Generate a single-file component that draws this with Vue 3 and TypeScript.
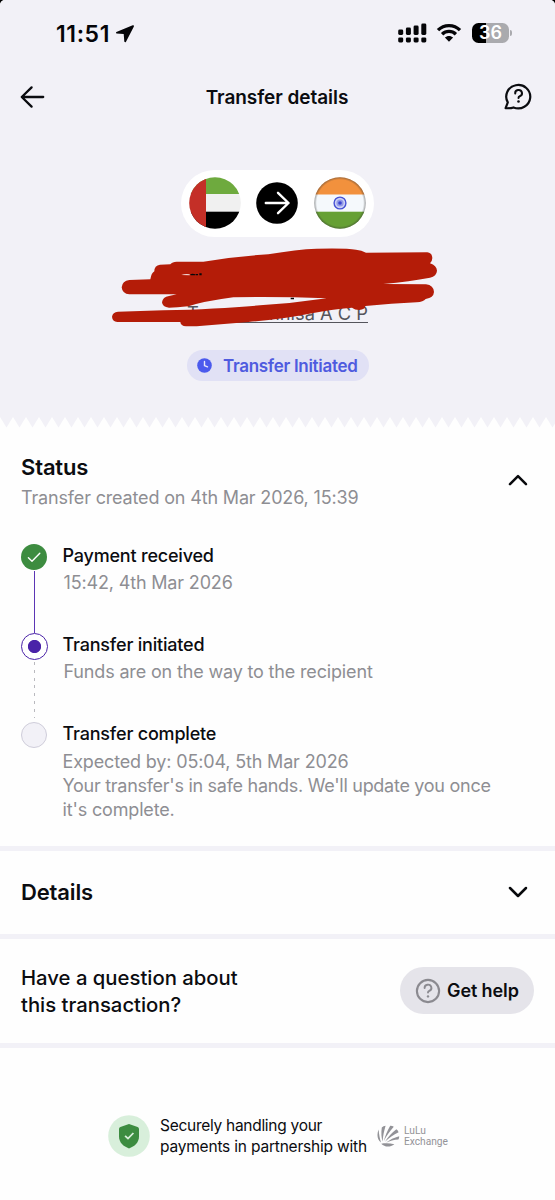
<script setup lang="ts">
type StepState = 'done' | 'active' | 'pending'

interface Step {
  title: string
  lines: string[]
  state: StepState
}

const steps: Step[] = [
  { title: 'Payment received', lines: ['15:42, 4th Mar 2026'], state: 'done' },
  { title: 'Transfer initiated', lines: ['Funds are on the way to the recipient'], state: 'active' },
  {
    title: 'Transfer complete',
    lines: ['Expected by: 05:04, 5th Mar 2026', "Your transfer's in safe hands. We'll update you once", "it's complete."],
    state: 'pending',
  },
]

const signalHeights = [5.5, 7.5, 9.5, 11.5]
</script>

<template>
  <main class="screen">
    <section class="hero">
      <div class="status-bar">
        <div class="clock">
          <span>11:51</span>
          <svg width="20" height="20" viewBox="0 0 20 20">
            <path d="M17.7 1.3 L1.4 8 Q0.4 8.8 1.5 9.5 L8.7 10.1 L9.3 17.6 Q10 19 11 17.8 L18.9 2.4 Q19.2 0.9 17.7 1.3Z" fill="#050508" />
          </svg>
        </div>
        <div class="indicators">
          <svg width="30" height="20" viewBox="0 0 30 20">
            <g fill="#050508">
              <rect v-for="(h, i) in signalHeights" :key="i" :x="0.2 + i * 7.7" :y="12 - h" width="5" :height="h" rx="1.4" />
              <rect v-for="(h, i) in signalHeights" :key="`d${h}`" :x="0.2 + i * 7.7" y="14.4" width="5" height="5" rx="1.4" />
            </g>
          </svg>
          <svg class="wifi" width="26" height="20" viewBox="0 0 26 20">
            <path d="M2 7.2 C8 1 18 1 24 7.2 M6.1 11.3 C10 7.5 16 7.5 19.9 11.3" fill="none" stroke="#050508" stroke-width="3.3" />
            <path d="M8.9 14.6 C11.2 12.3 14.8 12.3 17.1 14.6 L13 18.8Z" fill="#050508" />
          </svg>
          <div class="battery"><span>36</span></div>
          <i class="battery-tip"></i>
        </div>
      </div>

      <header class="nav">
        <svg width="26" height="24" viewBox="0 0 26 24">
          <path d="M23.2 12 H1.8 M11.6 2.4 L1.8 12 L11.6 21.6" fill="none" stroke="#0b0c10" stroke-width="2.3" stroke-linecap="round" stroke-linejoin="round" />
        </svg>
        <h1>Transfer details</h1>
        <svg width="28" height="28" viewBox="0 0 28 28">
          <path d="M1.6 25.2 L3.8 19.4 A12 11.7 0 1 1 9.5 24.4 C7 25.4 4.5 25.3 1.6 25.2Z" fill="none" stroke="#0b0c10" stroke-width="2.2" stroke-linejoin="round" />
          <path d="M11.2 10.5 A3.4 3.2 0 1 1 15.8 13.2 Q14.5 13.7 14.5 15.1" fill="none" stroke="#0b0c10" stroke-width="2" stroke-linecap="round" />
          <circle cx="14.5" cy="18.5" r="1.3" fill="#0b0c10" />
        </svg>
      </header>

      <div class="route">
        <svg width="52" height="52" viewBox="0 0 52 52">
          <clipPath id="uae"><circle cx="26" cy="26" r="25.8" /></clipPath>
          <g clip-path="url(#uae)">
            <rect width="52" height="17" fill="#6eaa3e" />
            <rect y="17" width="52" height="18" fill="#f0f0f0" />
            <rect y="34.7" width="52" height="18" fill="#000" />
            <rect width="17" height="52" fill="#c42f27" />
          </g>
        </svg>
        <svg width="42" height="42" viewBox="0 0 42 42">
          <circle cx="21" cy="21" r="20.8" fill="#000" />
          <path d="M9.8 21 H32.5 M22 10.8 L32.5 21 L22 31.2" fill="none" stroke="#fff" stroke-width="2.4" stroke-linecap="round" stroke-linejoin="round" />
        </svg>
        <svg width="52" height="52" viewBox="0 0 52 52">
          <defs>
            <clipPath id="india"><circle cx="26" cy="26" r="25.8" /></clipPath>
            <radialGradient id="rim"><stop offset="0.9" stop-color="#333" stop-opacity="0" /><stop offset="1" stop-color="#333" stop-opacity="0.45" /></radialGradient>
          </defs>
          <g clip-path="url(#india)">
            <rect width="52" height="18" fill="#f2913d" />
            <rect y="17.5" width="52" height="17.5" fill="#f5f9fc" />
            <rect y="34.7" width="52" height="18" fill="#66a034" />
          </g>
          <circle cx="26" cy="26" r="25.8" fill="url(#rim)" />
          <circle cx="26" cy="26" r="5.9" fill="#cdd3f5" stroke="#4550d4" stroke-width="1.4" />
          <circle cx="26" cy="26" r="3.6" fill="#929ae6" />
          <circle cx="26" cy="26" r="1.8" fill="#3a45d0" />
        </svg>
      </div>

      <div class="recipient">
        <div class="name"><span>T</span><span>nnisa A C P</span></div>
        <svg class="scribble" width="350" height="95" viewBox="0 0 1050 285">
          <path d="M88 120 L151 118 Q154 99 163 94 Q163 76 180 74 L211 73 Q217 65 230 65 L310 65 Q410 48 505 43 Q590 28 650 26 Q740 24 768 29 Q785 31 798 38 L982 37 Q997 40 997 54 Q997 63 990 70 Q1010 77 1011 92 Q1010 108 990 113 Q930 124 850 132 L978 133 Q1001 136 1002 156 Q1001 173 977 177 Q970 186 950 187 Q875 191 796 198 Q795 209 778 210 Q764 210 756 203 Q690 209 640 219 Q540 239 445 246 L290 259 L258 259 Q242 258 241 246 L52 246 Q37 244 36 230 Q38 216 54 215 L190 211 Q360 207 480 196 Q580 190 680 175 Q530 169 400 172 Q310 184 265 199 Q230 203 207 203 Q187 201 186 187 Q188 171 207 168 L230 163 L88 163 Q67 162 65 142 Q67 122 88 120Z" fill="#b41c08" />
          <path d="M244 105 Q255 101 269 103 V106Z" fill="#f3d9d9" />
          <path d="M270 104 Q276 99 286 103 V106 H273Z M287 102 H294 V106 H288Z M298 100 H305 V106 H298Z M572 173 H582 V178 H572Z" fill="#08080a" />
        </svg>
      </div>

      <div class="badge">
        <svg width="15" height="15" viewBox="0 0 14 14">
          <circle cx="7" cy="7" r="6.8" fill="#4b5aed" />
          <path d="M7 3.2 V7.2 L9.8 8.3" fill="none" stroke="#e8e8fb" stroke-width="1.3" stroke-linecap="round" stroke-linejoin="round" />
        </svg>
        <span>Transfer Initiated</span>
      </div>
    </section>

    <svg class="teeth" width="555" height="11" viewBox="0 0 555 11">
      <defs>
        <pattern id="tooth" width="13" height="11" patternUnits="userSpaceOnUse">
          <path d="M0 0 H13 L6.5 10.5Z" fill="#f2f1f7" />
        </pattern>
      </defs>
      <rect width="555" height="11" fill="url(#tooth)" />
    </svg>

    <section class="status">
      <div class="status-head">
        <div>
          <h2>Status</h2>
          <p>Transfer created on 4th Mar 2026, 15:39</p>
        </div>
        <svg width="20" height="12" viewBox="0 0 20 12">
          <path d="M2 10.2 L10 2.2 L18 10.2" fill="none" stroke="#08090c" stroke-width="2.5" stroke-linecap="round" stroke-linejoin="round" />
        </svg>
      </div>

      <ol class="steps">
        <li v-for="step in steps" :key="step.title" :class="step.state">
          <div class="rail">
            <span class="dot">
              <svg v-if="step.state === 'done'" width="26" height="26" viewBox="0 0 26 26">
                <path d="M7.4 13.7 L11 17.2 L18.8 9.3" fill="none" stroke="#fff" stroke-width="1.4" stroke-linecap="round" stroke-linejoin="round" />
              </svg>
            </span>
            <span v-if="step.state !== 'pending'" class="line"></span>
          </div>
          <div class="text">
            <h3>{{ step.title }}</h3>
            <p v-for="line in step.lines" :key="line" :class="{ tight: line.length > 40 }">{{ line }}</p>
          </div>
        </li>
      </ol>
    </section>

    <section class="details">
      <h2>Details</h2>
      <svg width="20" height="12" viewBox="0 0 20 12">
        <path d="M2 2 L10 10 L18 2" fill="none" stroke="#08090c" stroke-width="2.5" stroke-linecap="round" stroke-linejoin="round" />
      </svg>
    </section>

    <section class="question">
      <p>Have a question about<br />this transaction?</p>
      <button type="button">
        <svg width="26" height="26" viewBox="0 0 26 26">
          <circle cx="13" cy="13" r="11.1" fill="none" stroke="#8b8a90" stroke-width="2.1" />
          <path d="M9.6 10 A3.4 3.2 0 1 1 14.3 12.8 Q13 13.4 13 14.6" fill="none" stroke="#8b8a90" stroke-width="1.9" stroke-linecap="round" />
          <circle cx="13" cy="18.4" r="1.2" fill="#8b8a90" />
        </svg>
        <span>Get help</span>
      </button>
    </section>

    <footer>
      <svg width="42" height="42" viewBox="0 0 42 42">
        <circle cx="21" cy="21" r="20.8" fill="#d8efdb" />
        <path d="M21 9 L29.6 12 Q31 12.6 31 14 V21.5 C31 27.5 26.5 31.5 21 33.4 C15.5 31.5 11 27.5 11 21.5 V14 Q11 12.6 12.4 12Z" fill="#3c8c40" />
        <path d="M17.1 20.8 L20 23.6 L25.4 18" fill="none" stroke="#d8efdb" stroke-width="1.8" />
      </svg>
      <div class="secure">
        <p class="first">Securely handling your</p>
        <p>payments in partnership with</p>
      </div>
      <div class="partner">
        <svg width="24" height="23" viewBox="0 0 24 23" fill="#929297">
          <path d="M1.6 4.6 C-0.4 9.5 0.2 14.2 4 17.6 C2.6 13 2 9 1.6 4.6Z" />
          <path d="M8.6 0.8 Q6.3 0.8 4.8 2.4 C4 8 4.4 12.5 5.6 16.6 C6 11 7 6 8.6 0.8Z" />
          <path d="M16.8 1.8 Q15.3 0.6 13.2 0.7 C10.4 5.6 8.2 10.6 6.8 16.2 C9.4 11 12.6 6.4 16.8 1.8Z" />
          <path d="M21.6 7.2 Q21 5.2 19.4 4.2 C14.8 7.8 11 12 8 16.8 C12 13 16.4 9.8 21.6 7.2Z" />
          <path d="M21.4 14.6 Q22.3 13 22.2 11.2 C17 12.6 12.8 14.6 9 17.8 C13 16 17 14.8 21.4 14.6Z" />
          <path d="M4.2 18.7 C8 18 12.6 18 17.4 19.2 C13 22.3 8 22.4 4.2 18.7Z" />
        </svg>
        <p>LuLu<br />Exchange</p>
      </div>
    </footer>
  </main>
</template>

<style>
body {
  margin: 0;
  background: #000;
}
</style>

<style scoped>
* {
  box-sizing: border-box;
}

h1, h2, h3, p, ol {
  margin: 0;
  padding: 0;
  list-style: none;
}

svg {
  display: block;
  flex: none;
}

.screen {
  width: 555px;
  height: 1200px;
  overflow: hidden;
  border-radius: 5px 5px 0 0;
  background: #fefefe;
  color: #0b0c10;
  font-family: Inter, "Liberation Sans", sans-serif;
  white-space: nowrap;
}

.hero {
  display: flex;
  flex-direction: column;
  align-items: center;
  height: 417px;
  background: #f2f1f7;
}

.status-bar {
  display: flex;
  justify-content: space-between;
  align-items: center;
  width: 100%;
  height: 66px;
  padding: 0 43px 0 56px;
}

.clock {
  display: flex;
  align-items: center;
  gap: 5px;
  padding-top: 1px;
  font-size: 23px;
  font-weight: 600;
  letter-spacing: 0.6px;
  color: #050508;
}

.indicators {
  display: flex;
  align-items: center;
}

.wifi {
  margin: 0 10px 0 8px;
}

.battery {
  width: 37px;
  height: 20px;
  border-radius: 6.5px;
  background: linear-gradient(90deg, #000 0 38%, #aaaaae 38%);
  color: #fff;
  font-size: 18px;
  font-weight: 600;
  line-height: 20px;
  text-align: center;
}

.battery-tip {
  width: 2px;
  height: 6px;
  margin-left: 1px;
  border-radius: 0 2px 2px 0;
  background: #aaaaae;
}

.nav {
  display: flex;
  justify-content: space-between;
  align-items: center;
  width: 100%;
  height: 62px;
  padding: 0 23px 0 20px;
}

h1 {
  padding: 1px 0 0 4px;
  font-size: 19px;
  font-weight: 600;
  letter-spacing: -0.05px;
}

.route {
  display: flex;
  justify-content: center;
  align-items: center;
  gap: 15.5px;
  width: 193px;
  height: 67px;
  margin: 42px 1px 0 0;
  padding-bottom: 1px;
  border-radius: 34px;
  background: #fff;
}

.recipient {
  position: relative;
  width: 350px;
  height: 95px;
  margin: 3px 5px 0 0;
  padding: 63px 82px 0 87px;
}

.name {
  display: flex;
  justify-content: space-between;
  height: 20px;
  border-bottom: 1px solid #55555c;
  color: #55555c;
  font-size: 18.3px;
  line-height: 21px;
}

.scribble {
  position: absolute;
  top: 0;
  left: 0;
}

.badge {
  display: flex;
  align-items: center;
  gap: 11px;
  width: 182px;
  height: 31px;
  margin-top: 15px;
  padding-left: 10.5px;
  border-radius: 16px;
  background: #e1e1f5;
  color: #4f5bdf;
  font-size: 17px;
  font-weight: 600;
  letter-spacing: -0.3px;
}

.status {
  height: 423px;
  padding: 0 21px;
  border-bottom: 5px solid #f2f1f7;
}

.status-head {
  display: flex;
  justify-content: space-between;
  padding-top: 23px;
}

.status-head svg {
  margin: 23px 6px 0 0;
}

h2 {
  font-size: 22px;
  font-weight: 600;
  line-height: 32px;
  letter-spacing: -0.15px;
}

.status-head p,
.text p {
  color: #8e8e93;
  font-size: 18px;
  line-height: 24px;
  letter-spacing: -0.16px;
}

.status-head p {
  margin-top: 3px;
}

.steps {
  margin-top: 33.5px;
}

.steps li {
  display: flex;
  gap: 15.5px;
  height: 89.3px;
}

.rail {
  display: flex;
  flex-direction: column;
  align-items: center;
  width: 26px;
}

.dot {
  flex: none;
  width: 26px;
  height: 26px;
  border-radius: 50%;
}

.done .dot {
  background: #3d8c40;
}

.active .dot {
  width: 27px;
  height: 27px;
  border: 1.5px solid #4a23a8;
  background: radial-gradient(circle, #4a23a8 6.2px, #fff 7px);
}

.pending .dot {
  border: 1px solid #cfcdda;
  background: #f2f1f7;
}

.line {
  flex: 1;
  margin-left: 1px;
}

.done .line {
  width: 1.6px;
  margin-top: 1px;
  background: #5b35b4;
}

.active .line {
  width: 1px;
  margin: 2px 0 4px 1px;
  background: repeating-linear-gradient(180deg, #b9b9be 0 3px, transparent 3px 7.8px);
}

.text h3 {
  margin-bottom: 3.6px;
  font-size: 18px;
  font-weight: 500;
  line-height: 24px;
  letter-spacing: -0.2px;
}

.done .text p,
.active .text p {
  padding-left: 1px;
}

.text p.tight {
  letter-spacing: -0.28px;
}

.details {
  display: flex;
  justify-content: space-between;
  align-items: center;
  height: 88px;
  padding: 0 27px 2px 21px;
  border-bottom: 5px solid #f2f1f7;
}

.question {
  display: flex;
  justify-content: space-between;
  align-items: center;
  height: 109px;
  padding: 0 21px;
  border-bottom: 5px solid #f2f1f7;
}

.question p {
  font-size: 20.3px;
  font-weight: 500;
  line-height: 27px;
}

button {
  display: flex;
  align-items: center;
  gap: 6px;
  width: 134px;
  height: 47px;
  margin-bottom: 1px;
  padding: 0 0 0 15px;
  border: 0;
  border-radius: 24px;
  background: #e5e4ea;
  color: #0b0c10;
  font: 600 18px Inter, sans-serif;
  letter-spacing: -0.1px;
}

footer {
  display: flex;
  align-items: center;
  height: 42px;
  margin-top: 67px;
  padding-left: 108px;
}

.secure {
  width: 207px;
  margin: 0 10px 0 10px;
  font-size: 15.5px;
  line-height: 21px;
  letter-spacing: -0.2px;
}

.secure .first {
  letter-spacing: -0.28px;
}

.partner {
  display: flex;
  align-items: center;
  gap: 3px;
  color: #939398;
}

.partner p {
  font-family: Roboto, sans-serif;
  font-size: 10.2px;
  line-height: 11px;
}
</style>
